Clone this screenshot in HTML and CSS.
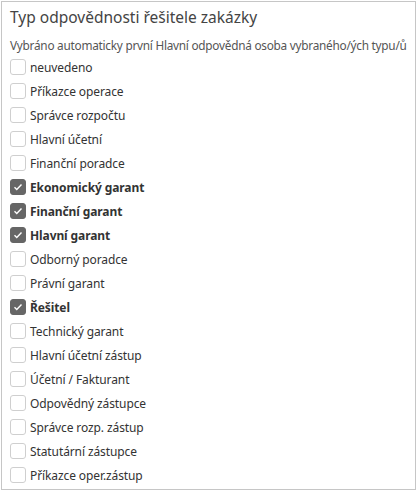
FILE: index.html
```html
<!DOCTYPE html>
<html lang="cs">
<head>
    <meta charset="UTF-8">
    <title>Typ odpovědnosti řešitele zakázky</title>
    <link rel="stylesheet" href="styles.css">
</head>
<body>
    <div class="panel">
        <h1>Typ odpovědnosti řešitele zakázky</h1>
        <div class="hint">Vybráno automaticky první Hlavní odpovědná osoba vybraného/ých typu/ů</div>

        <ul class="options">
            <li><span class="box"></span>neuvedeno</li>
            <li><span class="box"></span>Příkazce operace</li>
            <li><span class="box"></span>Správce rozpočtu</li>
            <li><span class="box"></span>Hlavní účetní</li>
            <li><span class="box"></span>Finanční poradce</li>
            <li class="checked"><span class="box"><svg viewBox="0 0 16 16"><path d="M4 8.3l2.6 2.6L12 5.2" /></svg></span>Ekonomický garant</li>
            <li class="checked"><span class="box"><svg viewBox="0 0 16 16"><path d="M4 8.3l2.6 2.6L12 5.2" /></svg></span>Finanční garant</li>
            <li class="checked"><span class="box"><svg viewBox="0 0 16 16"><path d="M4 8.3l2.6 2.6L12 5.2" /></svg></span>Hlavní garant</li>
            <li><span class="box"></span>Odborný poradce</li>
            <li><span class="box"></span>Právní garant</li>
            <li class="checked"><span class="box"><svg viewBox="0 0 16 16"><path d="M4 8.3l2.6 2.6L12 5.2" /></svg></span>Řešitel</li>
            <li><span class="box"></span>Technický garant</li>
            <li><span class="box"></span>Hlavní účetní zástup</li>
            <li><span class="box"></span>Účetní / Fakturant</li>
            <li><span class="box"></span>Odpovědný zástupce</li>
            <li><span class="box"></span>Správce rozp. zástup</li>
            <li><span class="box"></span>Statutární zástupce</li>
            <li><span class="box"></span>Příkazce oper.zástup</li>
        </ul>
    </div>
</body>
</html>
```

FILE: styles.css
```css
body {
    margin: 0;
    background-color: white;
    font-family: "Noto Sans", "Open Sans", sans-serif;
    color: #333;
}

.panel {
    box-sizing: border-box;
    width: 415px;
    height: 489px;
    margin: 1px 0 0 1px;
    border: 1px solid #c6c6c6;
    padding: 3px 0 0 8px;
    overflow: hidden;
}

h1 {
    margin: 0;
    font-size: 15.5px;
    font-weight: normal;
    color: #444;
    line-height: 24px;
}

.hint {
    margin-top: 8px;
    font-size: 11.8px;
    letter-spacing: -0.25px;
    color: #555;
    line-height: 16px;
    white-space: nowrap;
}

.options {
    list-style: none;
    margin: 2px 0 0 0;
    padding: 0;
}

.options li {
    display: flex;
    align-items: center;
    height: 24px;
    font-size: 12px;
    letter-spacing: -0.1px;
}

.box {
    box-sizing: border-box;
    width: 16px;
    height: 16px;
    margin-right: 4px;
    border: 1px solid #cfcfcf;
    border-radius: 3px;
    background-color: white;
    display: flex;
}

.box svg {
    width: 14px;
    height: 14px;
    fill: none;
    stroke: white;
    stroke-width: 1.6;
}

.checked {
    font-weight: bold;
}

.checked .box {
    background-color: #666;
    border-color: #666;
}
```
